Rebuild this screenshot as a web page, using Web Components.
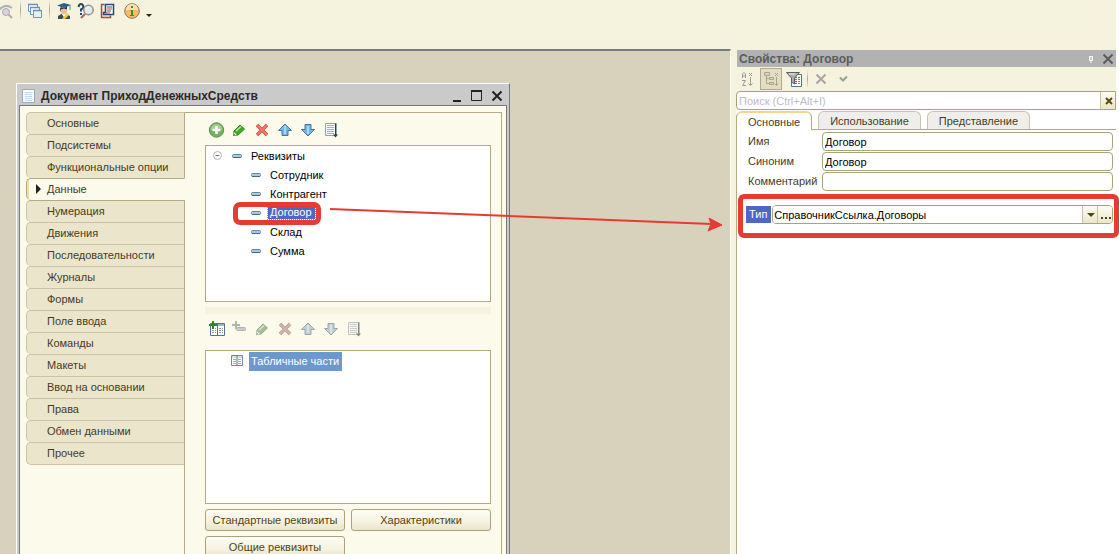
<!DOCTYPE html>
<html lang="ru">
<head>
<meta charset="utf-8">
<title>Конфигуратор</title>
<style>
html,body{height:100%;margin:0}
body{background:#fff;overflow:hidden;font:11px/16px "Liberation Sans",Arial,sans-serif;color:#453c1e}
</style>
</head>
<body>
<config-app></config-app>

<script>
const ICONS = {
  zoomoff: '<path d="M0 7Q6 0 13 5" fill="none" stroke="#aab4ba" stroke-width="2"/><circle cx="7" cy="9" r="3.5" fill="#d3d6e0" stroke="#a9a9b8"/><path d="M9.500 11.500L13 15" stroke="#c2a6a0" stroke-width="2"/>',
  windows: '<g stroke="#7096b8"><path d="M1.500 1.500h9v7h-9z" fill="#fff"/><path d="M3.500 4.500h9v7h-9z" fill="#f3f8fc"/><path d="M6.500 7.500h8v7h-8z" fill="#e5f0f8"/></g><path d="M1 1.500h10M3 4.500h10M6 7.500h9" stroke="#6793b8" stroke-width="1.500"/>',
  student: '<path d="M2 16V13L6 10.500H10L14 13V16z" fill="#33505c"/><path d="M5.500 10.500l2.500 4 3-4z" fill="#fff"/><path d="M11 10l2 2-4 4H6z" fill="#f4c93a"/><path d="M5 5h6v3.500Q10 11.500 8 11.500T5 8.500z" fill="#efbd92"/><path d="M5 5v4L4 7V5z" fill="#7c4a25"/><path d="M1 2.500L8 0 15 2 8 5z" fill="#2c6288"/><path d="M4.500 4v2.500L8 5.500l3 1V3.500L8 5z" fill="#173b58"/><path d="M14 2v5" stroke="#4c8fb0"/>',
  help: '<path d="M0.500 4Q1 1 3 1T5.500 4Q5 5.500 3 6.500V8.500M3 10v2" fill="none" stroke="#20476a" stroke-width="2"/><path d="M7 11L3 15" stroke="#9b6957" stroke-width="2"/><circle cx="10.500" cy="7" r="4.700" fill="#dcecf4" stroke="#a18b80" stroke-width="1.500"/><path d="M8 6q1-2 3-2" stroke="#fff" fill="none"/>',
  docs: '<path d="M4.500 1.500h-3v13h9v-2" fill="#f4e8df" stroke="#935b43" stroke-width="1.500"/><path d="M5.500 1.500h8v10H3.500V9.500h2z" fill="#fff" stroke="#284a70" stroke-width="1.500"/><path d="M7 4h5M7 8h4" stroke="#315d84"/><path d="M7 6h5M6 10h4" stroke="#d24536"/>',
  info: '<circle cx="8" cy="8" r="7.300" fill="#f6bd63" stroke="#897667"/><path d="M2 7a6 6 0 0112 0z" fill="#fde2af"/><path d="M8 7v5M8 3v2" stroke="#4a8b2b" stroke-width="2"/><path d="M6.500 7.500h2M6 12.500h4" stroke="#4a8b2b"/>',
  add: '<circle cx="8.500" cy="8" r="7.200" fill="#72b25c" stroke="#5b9450"/><path d="M2.500 8a6 6 0 0112 0z" fill="#a4cd91"/><path d="M8.500 4v8M4.500 8h8" stroke="#fff" stroke-width="2.500"/>',
  pencil: '<path d="M2.500 13.500L3 9 9 3 13.500 7 7 13z" fill="#42a929" stroke="#28811b"/><path d="M5 9l5-4.500" stroke="#b4e98d" stroke-width="1.500"/><path d="M2 14l1-4 3 3z" fill="#efe4b2"/><path d="M2 14l1-2 1 1z" fill="#222"/>',
  del: '<path d="M3 3L13 13M13 3L3 13" stroke="#cf4035" stroke-width="3.200"/><path d="M3 3L13 13M13 3L3 13" stroke="#f2796c" stroke-width="1.800"/>',
  up: '<path d="M8 2L14.500 8.500H11V13.500H5V8.500H1.500z" fill="#72b8e8" stroke="#47759c"/><path d="M8 4v8" stroke="#a4daf6" stroke-width="2"/>',
  down: '<path d="M8 14L14.500 7.500H11V2.500H5V7.500H1.500z" fill="#72b8e8" stroke="#47759c"/><path d="M8 12V4" stroke="#a4daf6" stroke-width="2"/>',
  order: '<path d="M2.500 1.500h11v12h-11z" fill="#f5f9fc" stroke="#8ca2b5"/><path d="M4 3.500h7M4 5.500h7M4 7.500h7M4 9.500h7M4 11.500h7" stroke="#9db2c4"/><path d="M12.500 1.500v12" stroke="#263c52"/><path d="M10 12.500h5l-2.500 3z" fill="#263c52"/>',
  addtable: '<path d="M2.500 2.500h14v12h-14z" fill="#fff" stroke="#577291"/><path d="M3 4h13" stroke="#9db4cf" stroke-width="2"/><path d="M9.500 3v11" stroke="#577291"/><path d="M4 7.500h4M4 9.500h4M4 11.500h4M11 7.500h4M11 9.500h4M11 11.500h4" stroke="#8c9198" stroke-dasharray="2 1"/><path d="M5 0v8M1 4h8" stroke="#288a1c" stroke-width="2"/>',
  addrow: '<path d="M5 0v8M1 4h8" stroke="#6f8f68" stroke-width="2"/><rect x="5.500" y="6.500" width="9" height="3" rx="1" fill="#9fb4c0" stroke="#6e8794"/>',
  table: '<path d="M2.500 2.500h11v10h-11z" fill="#fff" stroke="#7088a5"/><path d="M3 4h10" stroke="#abc0d8"/><path d="M8 3v10" stroke="#587291"/><path d="M4 6.500h3M4 8.500h3M4 10.500h3M9 6.500h3M9 8.500h3M9 10.500h3" stroke="#a5abb2"/>',
  minus: '<rect x="3.500" y="6.500" width="9" height="3" rx="1" fill="#a9cadb" stroke="#6388a0"/><path d="M4 9.500h8" stroke="#47697f"/>',
  doc: '<path d="M2.500 1.500h12v13h-12z" fill="#f8fcff" stroke="#9badb8"/><path d="M5 4.500h7M5 6.500h7M5 8.500h7M5 10.500h7M5 12.500h7" stroke="#c5d7e2"/>',
  expander: '<circle cx="8.500" cy="7.500" r="4" fill="#fff" stroke="#b4b4b4"/><path d="M6.500 7.500h4" stroke="#777"/>',
  min: '<path d="M4 13h8" stroke="#222" stroke-width="2"/>',
  max: '<path d="M2.500 3.500h10v9h-10z" fill="none" stroke="#222"/><path d="M2 3h11" stroke="#222" stroke-width="2"/>',
  close: '<path d="M3.500 3.500l9 9M12.500 3.500l-9 9" stroke="currentColor" stroke-width="2"/>',
  sort: '<g fill="none" stroke="#9c9c92"><path d="M2.500 7V3L4 1.500 5.500 3V7M2.500 5h3M2 9.500h3.500L2.500 14.500H6M10.500 6v8M8.500 12.500l2 2 2-2"/><path d="M9 2l3 3M12 2L9 5"/></g>',
  tree: '<g fill="#d8d3ba" stroke="#aaa58d"><path d="M1.500 1.500h5v3h-5zM6.500 6.500h4v2h-4zM6.500 11.500h4v2h-4z"/><path d="M3.500 5v7.500h3M3.500 7.500h3M13.500 6v8M11.500 12.500l2 2 2-2M12 2l3 3M15 2l-3 3" fill="none"/></g>',
  filter: '<path d="M5.500 3.500h10v12h-10z" fill="#fff" stroke="#53718f"/><path d="M9 8.500h2M9 12.500h2" stroke="#5886b0"/><path d="M9 6.500h2M12 6.500h2M9 10.500h2" stroke="#d85b4e" stroke-width="1.500"/><path d="M12 8.500h2M12 10.500h2M12 12.500h2" stroke="#d85b4e"/><path d="M0.500 1.500h13L8.500 7v6l-3-2V7z" fill="#a9adb0" stroke="#5c6165"/><path d="M3 3h6" stroke="#f0f0f0"/>',
  cross: '<path d="M3.500 3.500l9 9M12.500 3.500l-9 9" stroke="#b3a1a1" stroke-width="2"/>',
  check: '<path d="M4 6.500l3 3 4-4" fill="none" stroke="#94a58c" stroke-width="2"/>',
  pin: '<path d="M6.500 5.500h3v4h-3zM8 10v2" fill="#ccc" stroke="#fff"/>',
  clear: '<path d="M5 5l6 6M11 5l-6 6" stroke="#5c4a00" stroke-width="2"/>',
  caret: '<path d="M4 6h8l-4 4z" fill="#54430a"/>',
  drop: '<path d="M5 6h6l-3 3z" fill="#2c2a10"/>',
  dots: '<path d="M3 10h2v2H3zM7 10h2v2H7zM11 10h2v2h-2z" fill="#54430a"/>'
};
const BASE = '*{box-sizing:border-box}button,input{font:inherit;color:inherit;margin:0}button{border:0;background:none;padding:0}ul{list-style:none;margin:0;padding:0}';
function define(name, markup, setup) {
  customElements.define(name, class extends HTMLElement {
    connectedCallback() {
      if (this.shadowRoot) return;
      const t = document.createElement('template');
      t.innerHTML = typeof markup === 'function' ? markup(this) : markup;
      this.attachShadow({mode: 'open'}).append(t.content.cloneNode(true));
      if (setup) setup(this, this.shadowRoot);
    }
  });
}

define('ui-icon', el => `<style>:host{display:block;width:16px;height:16px;flex:none}svg{display:block;overflow:visible}</style>
<svg width="16" height="16" viewBox="0 0 16 16" aria-hidden="true">${ICONS[el.getAttribute('name')]}</svg>`);

define('tool-button', el => `<style>${BASE}:host{display:block;flex:none}
button{display:grid;place-items:center;width:22px;height:22px}
:host([disabled]) ui-icon{filter:grayscale(.6);opacity:.6}
:host([pressed]) button{background:#e3dec3;border:1px solid #b1aa87}</style>
<button type="button" aria-label="${el.getAttribute('label')}" ${el.hasAttribute('disabled') ? 'disabled' : ''}><ui-icon name="${el.getAttribute('icon')}"></ui-icon></button>`);

define('main-toolbar', `<style>:host{display:flex;align-items:flex-start;height:49px;background:#f5f2dd;overflow:hidden}
i{width:1px;height:20px;background:linear-gradient(#f5f2dd,#a9a582,#f5f2dd);flex:none}
.a{margin-right:3px}.b{margin:0 3px}.c{margin-left:2px}tool-button.z{margin-left:-4px;margin-right:2px}.drop{padding-top:8px;margin-left:-2px}</style>
<tool-button class="z" icon="zoomoff" label="Найти"></tool-button><i class="a"></i>
<tool-button icon="windows" label="Окна"></tool-button><i class="b"></i>
<tool-button icon="student" label="Обучение"></tool-button>
<tool-button icon="help" label="Поиск в справке"></tool-button>
<tool-button icon="docs" label="Синтакс-помощник"></tool-button>
<tool-button class="c" icon="info" label="О программе"></tool-button>
<ui-icon class="drop" name="drop"></ui-icon>`);

define('side-tabs', `<style>${BASE}:host{display:block;width:159px;flex:none;background:linear-gradient(#b3ab84,#b3ab84) right/1px 100% no-repeat}
button{display:block;width:100%;height:22px;text-align:left;padding:0 0 1px 20px;background:#ebe5cc;border:1px solid #cbc4a4;border-right-color:#b3ab84;border-bottom-width:0;border-radius:5px 0 0 5px;white-space:nowrap}
li:last-child button{height:23px;border-bottom-width:1px}
button[aria-selected=true]{background:linear-gradient(90deg,#f8dc99 2px,#fcfaeb 2px);border-color:#b3ab84;border-right-color:#fcfaeb;position:relative}
button[aria-selected=true]::before{content:"";position:absolute;left:9px;top:5px;border:5px solid transparent;border-left-color:#222;border-right:0}
li.next button{border-top-color:#b3ab84}</style><ul role="tablist"></ul>`, (el, root) => {
  const names = ['Основные','Подсистемы','Функциональные опции','Данные','Нумерация','Движения','Последовательности','Журналы','Формы','Поле ввода','Команды','Макеты','Ввод на основании','Права','Обмен данными','Прочее'];
  root.querySelector('ul').innerHTML = names.map((n, i) => `<li role="presentation" class="${i === 4 ? 'next' : ''}"><button type="button" role="tab" aria-selected="${i === 3}">${n}</button></li>`).join('');
});

define('tree-row', el => `<style>:host{display:flex;align-items:center;height:19px;padding-left:3px}
:host([child]){padding-left:42px}
.t{margin-left:4px;padding:0 2px;white-space:nowrap;color:#000}
.row{display:flex;align-items:center;position:relative}
ui-icon+ui-icon{margin-left:4px}
:host([selected]) .t{background:#4d67c2;color:#fff;height:13px;line-height:13px;padding:0 3px 0 2px;outline:1px dotted #b89a35}
:host([selected]) .row::after{content:"";position:absolute;left:-15px;right:-6px;top:-3px;height:23px;border:5px solid #e63b30;border-radius:7px;box-sizing:border-box}
:host([group]){height:20px;padding-left:23px}
:host([group]) .t{background:#6c98d0;color:#fff;height:19px;line-height:19px;padding-right:3px}
</style><div class="row">${el.hasAttribute('open') ? '<ui-icon name="expander"></ui-icon>' : ''}<ui-icon name="${el.hasAttribute('group') ? 'table' : 'minus'}"></ui-icon><span class="t"><slot></slot></span></div>`);

define('push-button', `<style>${BASE}:host{display:block}
button{width:100%;height:22px;border:1px solid #aaa27a;border-radius:3px;background:linear-gradient(#fefdf6,#f5f2df 60%,#e9e4c8);color:#54430f;white-space:nowrap}</style><button type="button"><slot></slot></button>`);

define('object-page', `<style>:host{display:block;flex:1;border:1px solid #b3ab84;border-left:0;border-bottom:0;padding:6px 10px 0 20px}
.bar{display:flex;gap:1px;height:22px}
.box{box-sizing:border-box;border:1px solid #b3ab84;background:#fff}
.one{height:157px;margin-top:4px}.split{height:7px;background:#f5f2dd;margin:5px 0 4px}.two{height:154px;margin-top:10px}
.grid{display:grid;grid-template-columns:1fr 1fr;gap:5px 6px;margin-top:5px}</style>
<div class="bar">
<tool-button icon="add" label="Добавить"></tool-button><tool-button icon="pencil" label="Изменить"></tool-button><tool-button icon="del" label="Удалить"></tool-button><tool-button icon="up" label="Вверх"></tool-button><tool-button icon="down" label="Вниз"></tool-button><tool-button icon="order" label="Упорядочить"></tool-button></div>
<div class="box one"><tree-row open>Реквизиты</tree-row><tree-row child>Сотрудник</tree-row><tree-row child>Контрагент</tree-row><tree-row child selected>Договор</tree-row><tree-row child>Склад</tree-row><tree-row child>Сумма</tree-row></div>
<div class="split"></div>
<div class="bar"><tool-button icon="addtable" label="Добавить табличную часть"></tool-button><tool-button icon="addrow" label="Добавить реквизит" disabled></tool-button><tool-button icon="pencil" label="Изменить" disabled></tool-button><tool-button icon="del" label="Удалить" disabled></tool-button><tool-button icon="up" label="Вверх" disabled></tool-button><tool-button icon="down" label="Вниз" disabled></tool-button><tool-button icon="order" label="Упорядочить" disabled></tool-button></div>
<div class="box two"><tree-row group>Табличные части</tree-row></div>
<div class="grid"><push-button>Стандартные реквизиты</push-button><push-button>Характеристики</push-button><push-button>Общие реквизиты</push-button></div>`);

define('object-window', `<style>${BASE}:host{display:flex;flex-direction:column;box-sizing:border-box;background:#fcfaeb;border:1px solid #fff;border-right-color:#777;border-bottom:0;box-shadow:inset 2px 0 #cacaca,inset -2px 0 #cacaca}
header{display:flex;align-items:center;height:21px;padding:2px 4px 0 3px;background:#cacaca;color:#222}
h1{flex:1;font-size:12px;font-weight:bold;margin:0 0 0 5px;color:#2a2a2a;white-space:nowrap}
.ctl{display:flex;gap:4px}.body{display:flex;flex:1;margin:0 2px;padding:6px 4px 0 6px;border:1px solid #777;border-bottom:0}</style>
<header><ui-icon name="doc"></ui-icon><h1><slot></slot></h1><div class="ctl"><button type="button" aria-label="Свернуть"><ui-icon name="min"></ui-icon></button><button type="button" aria-label="Развернуть"><ui-icon name="max"></ui-icon></button><button type="button" aria-label="Закрыть"><ui-icon name="close"></ui-icon></button></div></header>
<div class="body"><side-tabs></side-tabs><object-page></object-page></div>`);

define('property-field', el => `<style>${BASE}:host{display:flex;align-items:flex-start;height:20px}
label{width:74px;flex:none;white-space:nowrap;line-height:19px}
input{flex:1;min-width:0;height:19px;border:1px solid #aaa27a;border-radius:4px;padding:0 2px;background:#fff;color:#000;outline:0}</style>
<label for="f">${el.getAttribute('label')}</label><input id="f" type="text" value="${el.getAttribute('value') || ''}">`);

define('type-field', `<style>${BASE}:host{display:flex;align-items:center;border:5px solid #e63b30;border-radius:6px;height:44px;padding:0 1px 3px 3px}
label{background:#4d67c2;color:#fff;line-height:17px;padding:0 4px 0 3px;margin-right:1px}
.f{display:flex;flex:1;height:19px;border:1px solid #aaa27a;border-radius:4px;overflow:hidden}
input{flex:1;min-width:0;border:0;padding:0 1px;color:#000;outline:0}
button{width:15px;border-left:1px solid #cbc4a4;background:linear-gradient(#fdfcf4,#ebe6ca);display:grid;place-items:center;overflow:hidden}</style>
<label for="t">Тип</label><div class="f"><input id="t" type="text" value="СправочникСсылка.Договоры"><button type="button" aria-label="Выбрать из списка"><ui-icon name="caret"></ui-icon></button><button type="button" aria-label="Выбрать тип"><ui-icon name="dots"></ui-icon></button></div>`);

define('properties-panel', `<style>${BASE}:host{display:flex;flex-direction:column;background:#f5f2dd}
header{display:flex;align-items:center;height:17px;background:#b2b2b2;color:#5c5c5c;gap:1px;margin-left:1px}
h2{flex:1;font-size:12px;line-height:16px;margin:0 0 0 2px}
.bar{display:flex;height:24px;align-items:center;padding-left:1px;gap:1px}.bar i{width:1px;height:18px;margin:0 1px;background:linear-gradient(#f5f2dd,#b1aa87,#f5f2dd)}
.search{display:flex;height:19px;border:1px solid #aaa27a;border-radius:4px 0 0 4px;background:#fff;overflow:hidden}
.search input{flex:1;min-width:0;border:0;padding:0 2px;outline:0;background:none}.search input::placeholder{color:#bcbcc4;opacity:1}
.search button{width:15px;border-left:1px solid #cbc4a4;background:linear-gradient(#fdfcf4,#ebe6ca);display:grid;place-items:center;overflow:hidden}
.tabs{display:flex;gap:6px;height:20px;background:#fff;align-items:flex-end;padding-top:1px;border-bottom:1px solid #b3ab84}
.tabs button{height:18px;border:1px solid #cbc4a4;border-bottom:0;border-radius:6px 6px 0 0;background:#efeeea;padding:0 11px;white-space:nowrap}
.tabs .on{height:19px;margin-bottom:-1px;background:#fff;border-color:#b3ab84;border-top:2px solid #f3d48a}
.body{flex:1;background:#fff;border-left:1px solid #b3ab84;padding:2px 3px 0 11px}
type-field{margin:2px -6px 0 -10px}</style>
<header><h2>Свойства: Договор</h2><button type="button" aria-label="Закрепить"><ui-icon name="pin"></ui-icon></button><button type="button" aria-label="Закрыть"><ui-icon name="close"></ui-icon></button></header>
<div class="bar"><tool-button icon="sort" label="По алфавиту"></tool-button><tool-button icon="tree" label="По категориям" pressed></tool-button><tool-button icon="filter" label="Отбор"></tool-button><i></i><tool-button icon="cross" label="Отменить"></tool-button><tool-button icon="check" label="Применить"></tool-button></div>
<div class="search"><input type="text" aria-label="Поиск" placeholder="Поиск (Ctrl+Alt+I)"><button type="button" aria-label="Очистить"><ui-icon name="clear"></ui-icon></button></div>
<div class="tabs" role="tablist"><button type="button" class="on" role="tab" aria-selected="true">Основные</button><button type="button" role="tab">Использование</button><button type="button" role="tab">Представление</button></div>
<div class="body"><property-field label="Имя" value="Договор"></property-field><property-field label="Синоним" value="Договор"></property-field><property-field label="Комментарий"></property-field><type-field></type-field></div>`);

define('callout-arrow', `<style>:host{position:absolute;left:330px;top:204px;width:394px;height:30px;pointer-events:none}svg{display:block;overflow:visible}</style>
<svg width="394" height="30" aria-hidden="true"><path d="M0 5L382 20" stroke="#e63b30" stroke-width="2"/><path d="M379 14L392 21 378 27 381 20z" fill="#e63b30" stroke="#e63b30"/></svg>`);

define('config-app', `<style>:host{display:grid;grid-template:auto 1fr / minmax(0,1fr) 380px;height:100vh;position:relative;overflow:hidden;padding-right:3px;box-sizing:border-box}
main-toolbar{grid-column:1/-1}
main{flex:1;background:#d8d2bd;border-top:2px solid #777a80;border-right:1px solid #fff;position:relative;overflow:hidden}
properties-panel{min-height:0;padding-top:1px}
object-window{position:absolute;left:16px;top:32px;width:494px;height:540px}
.desk{display:flex;flex-direction:column;background:#f5f2dd;padding-right:5px;min-height:0}</style>
<main-toolbar></main-toolbar><div class="desk"><main><object-window>Документ ПриходДенежныхСредств</object-window></main></div><properties-panel></properties-panel><callout-arrow></callout-arrow>`);
</script>
</body>
</html>
